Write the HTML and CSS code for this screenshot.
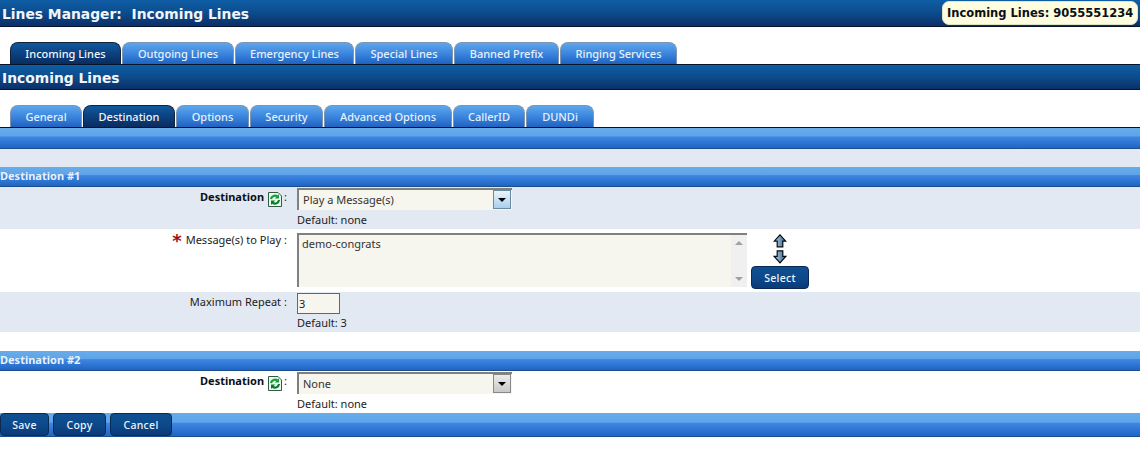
FILE: index.html
```html
<!DOCTYPE html>
<html lang="en">
<head>
<meta charset="utf-8">
<title>Lines Manager: Incoming Lines</title>
<link rel="stylesheet" href="styles.css">
</head>
<body>
<header class="title-bar main-title">
  <h1 class="title-text">Lines Manager:&nbsp; Incoming Lines</h1>
  <div class="badge">Incoming Lines: 9055551234</div>
</header>
<nav class="tabs tabs-top">
  <a class="tab active t111">Incoming Lines</a>
  <a class="tab t112">Outgoing Lines</a>
  <a class="tab t119">Emergency Lines</a>
  <a class="tab t98">Special Lines</a>
  <a class="tab t105">Banned Prefix</a>
  <a class="tab t117">Ringing Services</a>
</nav>
<div class="title-bar sub-title">
  <h2 class="title-text">Incoming Lines</h2>
</div>
<nav class="tabs tabs-sub">
  <a class="tab t72">General</a>
  <a class="tab active t92">Destination</a>
  <a class="tab t73">Options</a>
  <a class="tab t73">Security</a>
  <a class="tab t128">Advanced Options</a>
  <a class="tab t72">CallerID</a>
  <a class="tab t68">DUNDi</a>
</nav>
<div class="blue-bar empty-bar"></div>
<div class="spacer-light"></div>
<section>
  <h3 class="blue-bar section-head">Destination #1</h3>
  <div class="row light row-dest">
    <div class="label"><b>Destination</b>
      <svg class="refresh" viewBox="0 0 14 15" width="14" height="15"><path d="M.5.5H10L13.5 4V14.5H.5Z" fill="#eef8ee" stroke="#2f5a44"/><path d="M3 7.2A4 4 0 0 1 9.6 4.6" fill="none" stroke="#14a03a" stroke-width="2.2"/><path d="M11 2.2v4.4H6.8z" fill="#14a03a"/><path d="M11 8A4 4 0 0 1 4.4 10.6" fill="none" stroke="#0c7a2c" stroke-width="2.2"/><path d="M3 13V8.6h4.2z" fill="#0c7a2c"/></svg>
      <span class="colon">:</span></div>
    <div class="field">
      <div class="select"><span>Play a Message(s)</span><span class="arrow arrow-hot"><i></i></span></div>
      <div class="hint">Default: none</div>
    </div>
  </div>
  <div class="row row-msg">
    <div class="label"><span class="req">*</span>Message(s) to Play<span class="colon">:</span></div>
    <div class="field field-msg">
      <div class="listbox">
        <span class="list-text">demo-congrats</span>
        <span class="scroll"><i class="up"></i><i class="down"></i></span>
      </div>
      <div class="list-tools">
        <svg class="move" viewBox="0 0 14 30" width="14" height="30">
          <defs><linearGradient id="mv" x1="0" x2="1" y1="0" y2="0"><stop offset="0" stop-color="#b9d0e4"/><stop offset="1" stop-color="#2f628c"/></linearGradient></defs>
          <path d="M7 .8 12.8 7.2H9.8v5.6H4.2V7.2H1.2z" fill="url(#mv)" stroke="#050c12" stroke-width="1.2"/>
          <path d="M7 28.8 12.8 22.4H9.8V16.8H4.2v5.6H1.2z" fill="url(#mv)" stroke="#050c12" stroke-width="1.2"/>
        </svg>
        <button class="btn btn-select" type="button">Select</button>
      </div>
    </div>
  </div>
  <div class="row light row-rep">
    <div class="label">Maximum Repeat<span class="colon">:</span></div>
    <div class="field">
      <div class="input">3</div>
      <div class="hint">Default: 3</div>
    </div>
  </div>
</section>
<section class="second">
  <h3 class="blue-bar section-head">Destination #2</h3>
  <div class="row row-dest">
    <div class="label"><b>Destination</b>
      <svg class="refresh" viewBox="0 0 14 15" width="14" height="15"><path d="M.5.5H10L13.5 4V14.5H.5Z" fill="#eef8ee" stroke="#2f5a44"/><path d="M3 7.2A4 4 0 0 1 9.6 4.6" fill="none" stroke="#14a03a" stroke-width="2.2"/><path d="M11 2.2v4.4H6.8z" fill="#14a03a"/><path d="M11 8A4 4 0 0 1 4.4 10.6" fill="none" stroke="#0c7a2c" stroke-width="2.2"/><path d="M3 13V8.6h4.2z" fill="#0c7a2c"/></svg>
      <span class="colon">:</span></div>
    <div class="field">
      <div class="select"><span>None</span><span class="arrow"><i></i></span></div>
      <div class="hint">Default: none</div>
    </div>
  </div>
</section>
<footer class="blue-bar footer-bar">
  <button class="btn btn-save" type="button">Save</button>
  <button class="btn btn-copy" type="button">Copy</button>
  <button class="btn btn-cancel" type="button">Cancel</button>
</footer>
</body>
</html>
```
FILE: styles.css
```css
* { box-sizing: border-box; }
html, body { margin: 0; padding: 0; background: #fff; }
body { font: 11px/14px "Noto Sans", "Open Sans", sans-serif; color: #222; height: 463px; overflow: hidden; }
h1, h2, h3 { margin: 0; }

.title-bar {
  display: flex; align-items: center; justify-content: space-between;
  background: linear-gradient(#0f5ea5, #0c4c8b 50%, #0b2f68);
  border-bottom: 1px solid #06142b;
  color: #f2f6fb;
}
.title-text { font: bold 13.85px/16px "DejaVu Sans", sans-serif; padding: 1px 0 0 2px; }
.main-title { height: 27px; padding-right: 2px; }
.sub-title { height: 25px; }

.badge {
  width: 196px; height: 24px; padding-left: 4px;
  background: #fffde0; border: 1px solid #dfe3c8; border-radius: 7px;
  color: #0a1015; font: bold 11.5px/22px "DejaVu Sans", sans-serif; white-space: nowrap;
}

.tabs { display: flex; gap: 1px; padding-left: 10px; height: 38px; align-items: flex-end; border-bottom: 1px solid #06142b; }

.tab {
  height: 22px; text-align: center; font-weight: 500; font-size: 11px; line-height: 21px; color: #e6f0fb;
  background: linear-gradient(#5ea6ec, #3b86de 50%, #1f62c0);
  border: 1px solid #7b95b0; border-bottom: 0; border-radius: 8px 8px 0 0;
  white-space: nowrap;
}
.tab.active { background: linear-gradient(#0f5a9f, #0c4180 50%, #0a2c60); border-color: #10233d; color: #f2f6fb; }
.t111 { width: 111px; } .t112 { width: 112px; } .t119 { width: 119px; } .t98 { width: 98px; } .t105 { width: 105px; } .t117 { width: 117px; }
.t72 { width: 72px; } .t92 { width: 92px; } .t73 { width: 73px; } .t128 { width: 128px; } .t68 { width: 68px; }

.blue-bar {
  background: linear-gradient(#68ace9 0, #5ea4ea 40%, #3f86e2 45%, #1f65c4 100%);
  border-bottom: 1px solid #1c4d8e;
}
.empty-bar { height: 21px; }
.spacer-light { height: 18px; background: #e3e9f2; }
.section-head { height: 20px; font: bold 11px/18px "Noto Sans", sans-serif; color: #e9f2fb; }
.second { margin-top: 19px; }

.row { display: grid; grid-template-columns: 289px 1fr; column-gap: 8px; }
.light { background: #e3e9f2; }
.row-dest { height: 42px; }
.row-msg { height: 63px; }
.row-rep { height: 40px; }

.label { padding: 3px 2px 0 0; color: #1c1c1c; display: flex; justify-content: flex-end; align-items: flex-start; }
.label b { color: #0a0f14; font-weight: 700; }
.row-msg .label { padding-top: 4px; }
.colon { padding-left: 3px; }
.refresh { margin: 2px 0 0 4px; flex: none; }
.refresh + .colon { padding-left: 2px; }
.req { color: #a00d14; font: bold 18px/16px "DejaVu Sans", sans-serif; margin-right: 4px; }

.hint { line-height: 14px; margin-top: 3px; color: #222; }

.select {
  width: 215px; height: 22px; margin-top: 1px; padding: 3px 0 0 4px;
  background: #f6f5ee; border-top: 2px solid #808080; border-left: 2px solid #808080; color: #333;
  position: relative;
}
.arrow {
  width: 18px; height: 19px; border: 1px solid #6a8aa0;
  background: linear-gradient(#e9f3fb, #a9cfee); display: flex; align-items: center; justify-content: center;
  position: absolute; right: 1px; top: 0;
}
.arrow:not(.arrow-hot) { background: linear-gradient(#ececec, #c9c9c9); border-color: #888; }
.arrow i { width: 0; height: 0; border: 4px solid transparent; border-top: 4px solid #000; border-bottom: 0; }

.field-msg { display: flex; gap: 4px; }
.listbox {
  width: 450px; height: 54px; margin-top: 4px; padding: 2px 0 0 3px;
  background: #f6f5ee; border-top: 2px solid #808080; border-left: 2px solid #808080; color: #333;
  position: relative;
}
.scroll { position: absolute; right: 0; top: 0; bottom: 0; width: 16px; background: #f0f0f0; }
.scroll i { position: absolute; left: 4px; width: 0; height: 0; border: 4px solid transparent; }
.scroll .up { top: 6px; border-bottom: 4px solid #a0a0a0; border-top: 0; }
.scroll .down { bottom: 6px; border-top: 4px solid #a0a0a0; border-bottom: 0; }

.list-tools { display: flex; flex-direction: column; align-items: center; width: 58px; margin-top: 5px; gap: 2px; }
.move { flex: none; }

.btn {
  height: 23px; padding: 0; font: 500 10.5px/20px "Noto Sans", sans-serif; color: #eef4fb; letter-spacing: .3px;
  background: linear-gradient(#0f4f90, #0d4a8c 50%, #0b3a78);
  border: 1px solid #0a2a55; border-radius: 4px;
}
.btn-select { width: 58px; }

.input {
  width: 43px; height: 21px; margin-top: 1px; padding: 3px 0 0 1px;
  background: #f6f5ee; border: 1px solid #666; color: #222;
}
.row-rep .hint { margin-top: 2px; }

.footer-bar { height: 24px; display: flex; gap: 4px; }
.btn-save { width: 49px; }
.btn-copy { width: 53px; }
.btn-cancel { width: 62px; }
```
